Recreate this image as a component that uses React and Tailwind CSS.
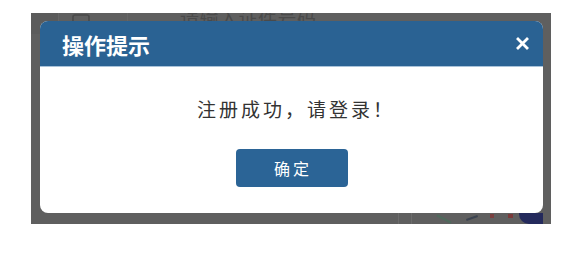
const cjk = { fontFamily: '"Noto Sans CJK SC", "Microsoft YaHei", sans-serif' };

function Backdrop() {
  // the login page that shows round the edges of the modal
  return (
    <div className="col-start-1 row-start-1 flex flex-col justify-between text-[#4a4a4a]" style={cjk}>
      <div className="flex items-end -mt-[12px] h-[33px]">
        <div className="w-[28px] h-full bg-[#5b5b5b] border-r border-[#666]" />
        <div className="flex items-end pl-[12px] pb-[1px]">
          <svg width="28" height="20" viewBox="0 0 28 20" fill="none" stroke="currentColor" strokeWidth="1.6">
            <rect x="2" y="2" width="16" height="14" rx="2" />
            <path d="M16 13l3 3 6-7" />
          </svg>
        </div>
        <div className="ml-[28px] w-px h-full bg-[#666]" />
        <span className="ml-[52px] text-[19px] leading-[24px] pb-[4px] tracking-[0.5px]">请输入证件号码</span>
      </div>
      <div className="flex items-end h-[11px]">
        <div className="ml-[367px] w-px h-full bg-[#6c6c6c]" />
        <div className="ml-[12px] w-px h-full bg-[#6c6c6c]" />
        <div className="ml-[24px] mb-[4px] w-[16px] h-[2px] rotate-[28deg] bg-[#4f6a5c]" />
        <div className="ml-[14px] mb-[5px] w-[12px] h-[2px] -rotate-[20deg] bg-[#3b4350]" />
        <div className="ml-[12px] mb-[6px] w-[4px] h-[4px] bg-[#7a4040]" />
        <div className="ml-[14px] mb-[6px] w-[5px] h-[4px] bg-[#7a3a3a]" />
        <div className="ml-[6px] w-[24px] h-[11px] rounded-bl-[10px] bg-[#242a5c]" />
      </div>
    </div>
  );
}

export default function App() {
  return (
    <div className="w-[572px] h-[268px] bg-white pt-[13px] pl-[31px]">
      <div className="grid w-[520px] h-[211px] bg-[#5f5f5f] overflow-hidden">
        <Backdrop />

        {/* dialog */}
        <div
          className="col-start-1 row-start-1 ml-[9px] mt-[8px] mr-[8px] mb-[11px] bg-white rounded-[8px] overflow-hidden flex flex-col"
          style={cjk}
        >
          <div className="h-[46px] shrink-0 bg-[#2a6293] border-b border-[#a9c3da] flex items-center justify-between pl-[22px] pr-[14px]">
            <span className="text-white text-[22px] font-bold leading-none">操作提示</span>
            <svg width="13" height="13" viewBox="0 0 13 13" stroke="white" strokeWidth="2.8" strokeLinecap="square">
              <path d="M2 2l9 9M11 2l-9 9" />
            </svg>
          </div>
          <div className="flex-1 flex flex-col items-center pt-[29px]">
            <p className="text-[19px] leading-[26px] text-[#333] tracking-[3px] pl-[9px]">注册成功，请登录！</p>
            <button className="mt-[27px] w-[112px] h-[38px] rounded-[4px] bg-[#2b6496] text-white text-[16px] leading-none tracking-[3px] pl-[3px]">
              确定
            </button>
          </div>
        </div>
      </div>
    </div>
  );
}
